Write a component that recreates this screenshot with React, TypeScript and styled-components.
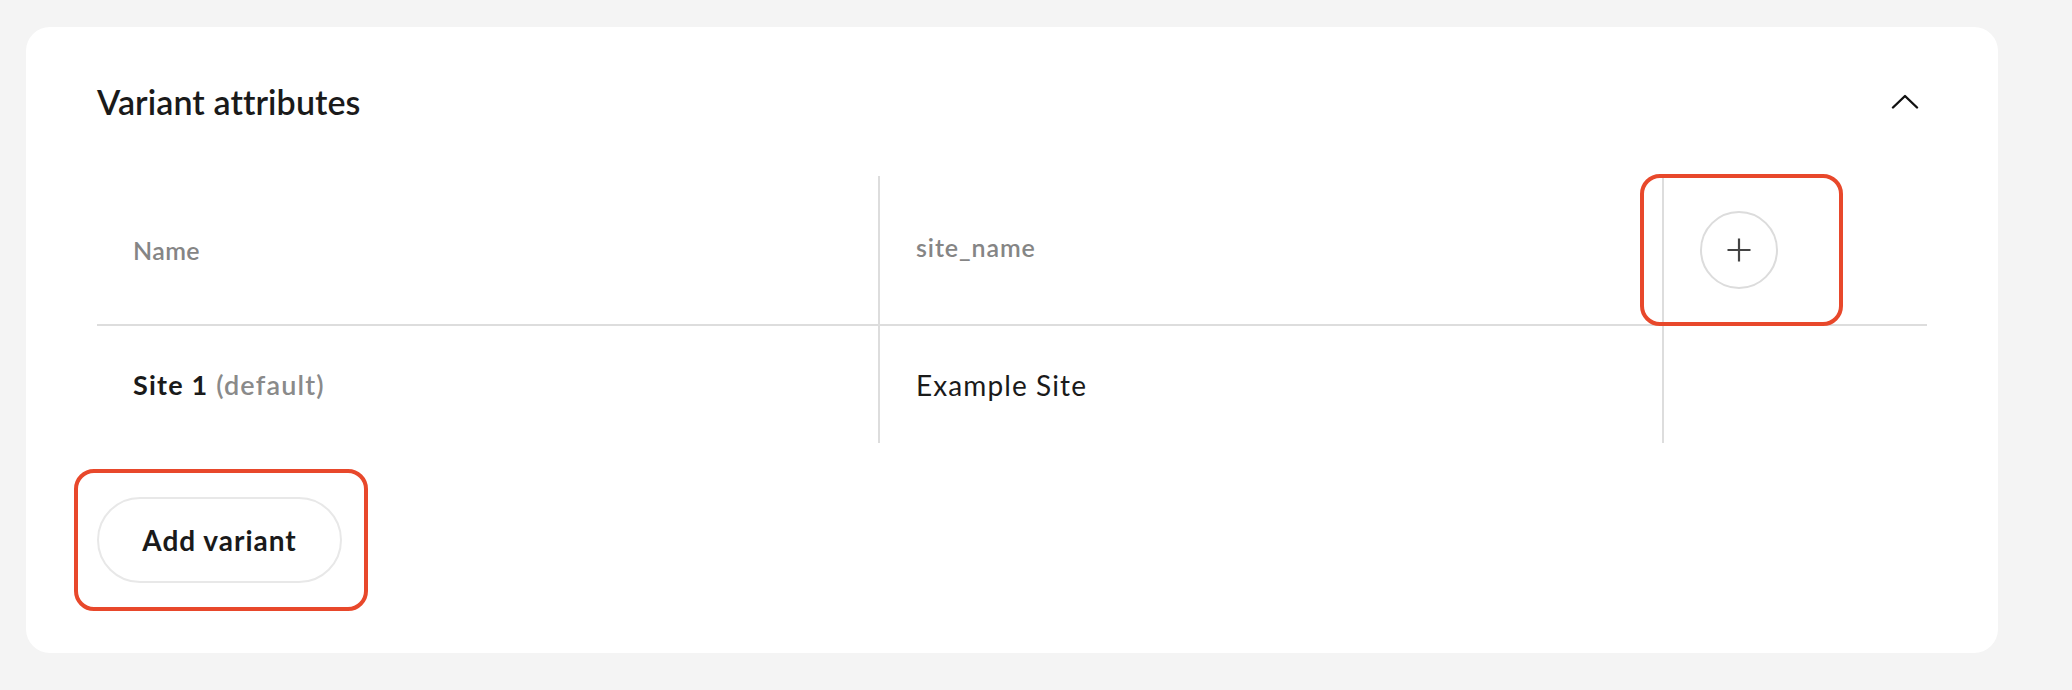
import React from 'react'
import styled, { createGlobalStyle } from 'styled-components'

const GlobalStyle = createGlobalStyle`
  html, body {
    margin: 0;
    padding: 0;
    background: #f4f4f4;
    font-family: Lato, "Liberation Sans", sans-serif;
    color: #1a1a1a;
  }
`

const Page = styled.div`
  min-height: 690px;
  box-sizing: border-box;
  padding: 27px 74px 0 26px;
`

const Card = styled.section`
  background: #ffffff;
  border-radius: 24px;
  padding: 34px 71px 70px 71px;
`

const Header = styled.div`
  height: 80px;
  display: flex;
  align-items: center;
  justify-content: space-between;
`

const Title = styled.h2`
  margin: 0;
  font-size: 34px;
  font-weight: 600;
  letter-spacing: 0.1px;
`

const IconButton = styled.button`
  width: 44px;
  height: 44px;
  display: flex;
  align-items: center;
  justify-content: center;
  padding: 0;
  border: none;
  background: none;
  cursor: pointer;
`

const Table = styled.div`
  margin-top: 35px;
  display: grid;
  grid-template-columns: 781px 784px 1fr;
`

const Cell = styled.div<{ $header?: boolean; $divider?: boolean }>`
  height: ${p => (p.$header ? '148px' : '117px')};
  display: flex;
  align-items: center;
  padding-left: 36px;
  border-bottom: ${p => (p.$header ? '2px solid #dddddd' : 'none')};
  border-left: ${p => (p.$divider ? '2px solid #dddddd' : 'none')};
`

const HeadText = styled.span<{ $lift?: number; $spacing?: number }>`
  font-size: 25px;
  font-weight: 600;
  letter-spacing: ${p => p.$spacing ?? 0.4}px;
  color: #858585;
  margin-top: ${p => -(p.$lift || 0)}px;
`

const NameText = styled.span`
  font-size: 27px;
  font-weight: 700;
  letter-spacing: 1.2px;
  color: #1a1a1a;
`

const DefaultTag = styled.span`
  font-weight: 600;
  color: #8a8a8a;
`

const ValueText = styled.span`
  font-size: 28px;
  font-weight: 400;
  letter-spacing: 1.1px;
  color: #1a1a1a;
`

const Marked = styled.div<{ $inset: string }>`
  position: relative;
  display: inline-flex;

  &::after {
    content: '';
    position: absolute;
    inset: ${p => p.$inset};
    border: 4px solid #e8482b;
    border-radius: 20px;
    pointer-events: none;
  }
`

const RoundButton = styled.button`
  width: 78px;
  height: 78px;
  border-radius: 50%;
  border: 2px solid #dcdcdc;
  background: #ffffff;
  display: flex;
  align-items: center;
  justify-content: center;
  padding: 0;
  cursor: pointer;
`

const Footer = styled.div`
  margin-top: 54px;
  display: flex;
`

const PillButton = styled.button`
  width: 245px;
  height: 86px;
  border-radius: 43px;
  border: 2px solid #e8e8e8;
  background: #ffffff;
  font-family: inherit;
  font-size: 28px;
  font-weight: 700;
  letter-spacing: 1px;
  color: #1a1a1a;
  cursor: pointer;
`

function ChevronUp() {
  return (
    <svg width="28" height="15" viewBox="0 0 28 15" fill="none">
      <path d="M2 13.5 L14 2 L26 13.5" stroke="#111" strokeWidth="2.4" strokeLinecap="round" strokeLinejoin="round" />
    </svg>
  )
}

function PlusIcon() {
  return (
    <svg width="24" height="24" viewBox="0 0 24 24" fill="none">
      <path d="M12 0.5 V23.5 M0.5 12 H23.5" stroke="#444" strokeWidth="2.2" />
    </svg>
  )
}

export default function App() {
  return (
    <>
      <GlobalStyle />
      <Page>
        <Card>
          <Header>
            <Title>Variant attributes</Title>
            <IconButton aria-label="Collapse">
              <ChevronUp />
            </IconButton>
          </Header>

          <Table>
            <Cell $header>
              <HeadText>Name</HeadText>
            </Cell>
            <Cell $header $divider>
              <HeadText $lift={6} $spacing={0.9}>site_name</HeadText>
            </Cell>
            <Cell $header $divider>
              <Marked $inset="-37px -65px -37px -60px">
                <RoundButton aria-label="Add attribute">
                  <PlusIcon />
                </RoundButton>
              </Marked>
            </Cell>

            <Cell>
              <NameText>
                Site 1 <DefaultTag>(default)</DefaultTag>
              </NameText>
            </Cell>
            <Cell $divider>
              <ValueText>Example Site</ValueText>
            </Cell>
            <Cell $divider />
          </Table>

          <Footer>
            <Marked $inset="-28px -26px -28px -23px">
              <PillButton>Add variant</PillButton>
            </Marked>
          </Footer>
        </Card>
      </Page>
    </>
  )
}
